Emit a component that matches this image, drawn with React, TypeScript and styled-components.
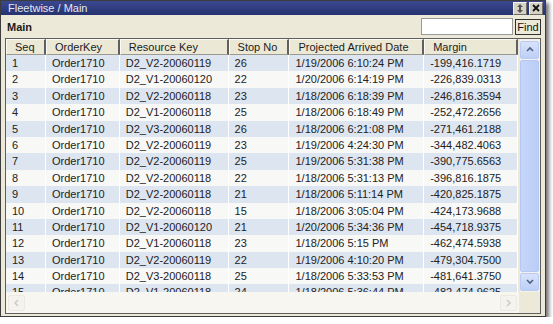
import styled, { createGlobalStyle } from 'styled-components';

const GlobalStyle = createGlobalStyle`
    body {
        margin: 0;
        background: #ffffff;
        font-family: "Liberation Sans", Arial, sans-serif;
    }
`;

type Row = [string, string, string, string];

const rows: Row[] = [
    ['D2_V2-20060119', '26', '1/19/2006 6:10:24 PM', '-199,416.1719'],
    ['D2_V1-20060120', '22', '1/20/2006 6:14:19 PM', '-226,839.0313'],
    ['D2_V2-20060118', '23', '1/18/2006 6:18:39 PM', '-246,816.3594'],
    ['D2_V1-20060118', '25', '1/18/2006 6:18:49 PM', '-252,472.2656'],
    ['D2_V3-20060118', '26', '1/18/2006 6:21:08 PM', '-271,461.2188'],
    ['D2_V2-20060119', '23', '1/19/2006 4:24:30 PM', '-344,482.4063'],
    ['D2_V2-20060119', '25', '1/19/2006 5:31:38 PM', '-390,775.6563'],
    ['D2_V2-20060118', '22', '1/18/2006 5:31:13 PM', '-396,816.1875'],
    ['D2_V2-20060118', '21', '1/18/2006 5:11:14 PM', '-420,825.1875'],
    ['D2_V2-20060118', '15', '1/18/2006 3:05:04 PM', '-424,173.9688'],
    ['D2_V1-20060120', '21', '1/20/2006 5:34:36 PM', '-454,718.9375'],
    ['D2_V1-20060118', '23', '1/18/2006 5:15 PM', '-462,474.5938'],
    ['D2_V2-20060119', '22', '1/19/2006 4:10:20 PM', '-479,304.7500'],
    ['D2_V3-20060118', '25', '1/18/2006 5:33:53 PM', '-481,641.3750'],
    ['D2_V1-20060118', '24', '1/18/2006 5:36:44 PM', '-482,474.9625'],
];

const columns = [
    { title: 'Seq', width: 40 },
    { title: 'OrderKey', width: 74 },
    { title: 'Resource Key', width: 109 },
    { title: 'Stop No', width: 61 },
    { title: 'Projected Arrived Date', width: 135 },
    { title: 'Margin', width: 94 },
];

const Window = styled.div`
    width: 544px;
    height: 315px;
    border: 1px solid #3c3c3c;
    background: #ece9d8;
    box-shadow: 3px 3px 4px rgba(0, 0, 0, 0.55);
    display: flex;
    flex-direction: column;
    font-size: 11px;
    overflow: hidden;
`;

const TitleBar = styled.div`
    height: 14px;
    background: linear-gradient(#3a4890, #26336f);
    color: #e4e7f2;
    display: flex;
    align-items: center;
    padding: 0 2px 0 7px;
    font-size: 11px;
`;

const TitleText = styled.span`
    flex: 1;
`;

const TitleButton = styled.div`
    width: 12px;
    height: 11px;
    margin-left: 2px;
    background: #d6d3c6;
    border: 1px solid #f4f3ee;
    border-right-color: #6b6b6b;
    border-bottom-color: #6b6b6b;
    display: flex;
    align-items: center;
    justify-content: center;
`;

const Toolbar = styled.div`
    height: 23px;
    display: flex;
    align-items: center;
    padding: 0 4px 0 6px;
`;

const Heading = styled.span`
    flex: 1;
    font-weight: bold;
    color: #1a1a1a;
    font-size: 11px;
`;

const SearchInput = styled.input`
    width: 86px;
    height: 15px;
    border: 1px solid #9a9a9a;
    background: #fff;
    padding: 0 2px;
    margin: 0;
    outline: none;
`;

const FindButton = styled.button`
    margin-left: 2px;
    height: 16px;
    width: 26px;
    padding: 0;
    border: 1px solid #303030;
    background: #ece9d8;
    font: 11px "Liberation Sans", Arial, sans-serif;
    color: #111;
`;

const Grid = styled.div`
    margin: 0 4px 2px 4px;
    flex: 1;
    border: 1px solid #5e5e5e;
    display: flex;
    flex-direction: column;
    min-height: 0;
`;

const Body = styled.div`
    flex: 1;
    display: flex;
    min-height: 0;
`;

const TableArea = styled.div`
    flex: 1;
    overflow: hidden;
    display: flex;
    flex-direction: column;
`;

const HeaderRow = styled.div`
    display: flex;
    height: 16px;
    flex-shrink: 0;
`;

const HeaderCell = styled.div<{ $w: number }>`
    width: ${(p) => p.$w}px;
    box-sizing: border-box;
    padding-left: 8px;
    border: 1px solid #fbfaf5;
    border-right: 2px solid #5f5f5f;
    border-bottom-color: #9c9a90;
    background: #ebe8d6;
    color: #1c1c1c;
    line-height: 14px;
    white-space: nowrap;
`;

const DataRow = styled.div<{ $odd: boolean }>`
    display: flex;
    height: 16.4px;
    flex-shrink: 0;
    background: ${(p) => (p.$odd ? '#dde5f1' : '#f8f8f6')};
`;

const Cell = styled.div<{ $w: number }>`
    width: ${(p) => p.$w}px;
    box-sizing: border-box;
    padding-left: 6px;
    border-right: 1px solid #ffffff;
    color: #222;
    line-height: 16.4px;
    white-space: nowrap;
    overflow: hidden;
`;

const VScroll = styled.div`
    width: 19px;
    margin-left: 2px;
    padding: 2px 1px 1px 0;
    display: flex;
    flex-direction: column;
    gap: 1px;
    background: #f3f2ec;
`;

const ScrollButton = styled.div`
    height: 16px;
    flex-shrink: 0;
    border: 1px solid #b9cbf3;
    border-radius: 2px;
    background: linear-gradient(#d8e3fb, #bccff6);
    display: flex;
    align-items: center;
    justify-content: center;
`;

const Thumb = styled.div`
    flex: 1;
    border: 1px solid #b6c8f2;
    border-radius: 2px;
    background: linear-gradient(90deg, #c6d6fa, #b9cdf6);
`;

const BottomBar = styled.div`
    height: 21px;
    display: flex;
    flex-shrink: 0;
`;

const HScroll = styled.div`
    flex: 1;
    background: #f7f6f0;
    display: flex;
    justify-content: space-between;
    align-items: center;
    padding: 0 2px;
`;

const DisabledButton = styled.div`
    width: 15px;
    height: 14px;
    border: 1px solid #ebe9e0;
    border-radius: 2px;
    background: #f4f3ee;
    display: flex;
    align-items: center;
    justify-content: center;
`;

const Corner = styled.div`
    width: 21px;
    background: #ece9d8;
`;

function Chevron({ dir, color }: { dir: 'up' | 'down' | 'left' | 'right'; color: string }) {
    const d = {
        up: 'M1 5 L4 2 L7 5',
        down: 'M1 2 L4 5 L7 2',
        left: 'M5 1 L2 4 L5 7',
        right: 'M2 1 L5 4 L2 7',
    }[dir];
    return (
        <svg width="8" height="8" viewBox="0 0 8 8">
            <path d={d} stroke={color} strokeWidth="1.6" fill="none" />
        </svg>
    );
}

export default function App() {
    return (
        <>
            <GlobalStyle />
            <Window>
                <TitleBar>
                    <TitleText>Fleetwise / Main</TitleText>
                    <TitleButton>
                        <svg width="8" height="9" viewBox="0 0 8 9">
                            <path d="M4 0 L1 3 H3 V6 H1 L4 9 L7 6 H5 V3 H7 Z" fill="#555" />
                        </svg>
                    </TitleButton>
                    <TitleButton>
                        <svg width="8" height="8" viewBox="0 0 8 8">
                            <path d="M1 1 L7 7 M7 1 L1 7" stroke="#111" strokeWidth="1.8" />
                        </svg>
                    </TitleButton>
                </TitleBar>
                <Toolbar>
                    <Heading>Main</Heading>
                    <SearchInput />
                    <FindButton>Find</FindButton>
                </Toolbar>
                <Grid>
                    <Body>
                        <TableArea>
                            <HeaderRow>
                                {columns.map((c) => (
                                    <HeaderCell key={c.title} $w={c.width}>
                                        {c.title}
                                    </HeaderCell>
                                ))}
                            </HeaderRow>
                            {rows.map((r, i) => (
                                <DataRow key={i} $odd={i % 2 === 0}>
                                    <Cell $w={columns[0].width}>{i + 1}</Cell>
                                    <Cell $w={columns[1].width}>Order1710</Cell>
                                    <Cell $w={columns[2].width}>{r[0]}</Cell>
                                    <Cell $w={columns[3].width}>{r[1]}</Cell>
                                    <Cell $w={columns[4].width}>{r[2]}</Cell>
                                    <Cell $w={columns[5].width}>{r[3]}</Cell>
                                </DataRow>
                            ))}
                        </TableArea>
                        <VScroll>
                            <ScrollButton>
                                <Chevron dir="up" color="#4d6185" />
                            </ScrollButton>
                            <Thumb />
                            <ScrollButton>
                                <Chevron dir="down" color="#4d6185" />
                            </ScrollButton>
                        </VScroll>
                    </Body>
                    <BottomBar>
                        <HScroll>
                            <DisabledButton>
                                <Chevron dir="left" color="#cfcdc4" />
                            </DisabledButton>
                            <DisabledButton>
                                <Chevron dir="right" color="#cfcdc4" />
                            </DisabledButton>
                        </HScroll>
                        <Corner />
                    </BottomBar>
                </Grid>
            </Window>
        </>
    );
}
